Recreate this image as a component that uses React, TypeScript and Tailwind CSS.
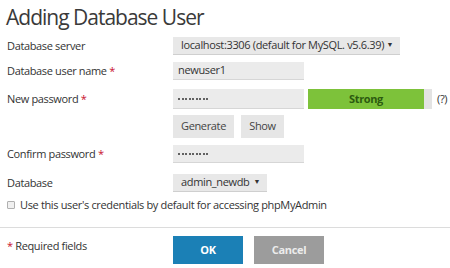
function Dots() {
  return (
    <div className="flex items-center gap-[1.5px]">
      {Array.from({ length: 9 }).map((_, i) => (
        <span key={i} className="w-[2px] h-[2px] rounded-full bg-[#333]" />
      ))}
    </div>
  );
}

export default function App() {
  const font = { fontFamily: '"Open Sans", "Noto Sans", sans-serif' };
  return (
    <div className="w-[450px] h-[268px] bg-white text-[#333] overflow-hidden tracking-[-0.35px]" style={font}>
      <h1 className="pl-[6px] pt-[2px] h-[34px] text-[21px] font-normal leading-[30px] tracking-[-1px] text-[#3a3a3a]">
        Adding Database User
      </h1>

      <div className="flex items-center h-[18px] mt-[3px] text-[11px]">
        <span className="w-[173px] pl-[7px]">Database server</span>
        <div className="w-[227px] h-[18px] bg-[#e8e8e8] border-b border-[#cfcfcf] flex items-center justify-between pl-[8px] pr-[7px] whitespace-nowrap">
          <span>localhost:3306 (default for MySQL. v5.6.39)</span>
          <span className="text-[7px]">▼</span>
        </div>
      </div>

      <div className="flex items-center h-[18px] mt-[7px] text-[11px]">
        <span className="w-[173px] pl-[7px]">
          Database user name <span className="text-[#c8102e]">*</span>
        </span>
        <div className="w-[131px] h-[18px] bg-[#ebebeb] border-b border-[#d6d6d6] flex items-center px-[5px]">
          newuser1
        </div>
      </div>

      <div className="flex items-center h-[20px] mt-[9px] text-[11px]">
        <span className="w-[173px] pl-[7px]">
          New password <span className="text-[#c8102e]">*</span>
        </span>
        <div className="w-[131px] h-[20px] bg-[#ebebeb] border-b border-[#d6d6d6] flex items-center px-[5px]">
          <Dots />
        </div>
        <div className="ml-[4px] w-[124px] h-[20px] flex bg-[#e3e3e3]">
          <div className="w-[116px] h-[20px] bg-[#7dc23a] flex items-center justify-center font-bold text-[#2c5a10]">
            Strong
          </div>
        </div>
        <span className="ml-[5px] text-[11px]">(?)</span>
      </div>

      <div className="flex h-[23px] mt-[6px] pl-[173px] gap-[7px] text-[11px]">
        <div className="w-[61px] h-[23px] bg-[#e6e6e6] flex items-center justify-center text-[#444]">Generate</div>
        <div className="w-[43px] h-[23px] bg-[#e6e6e6] flex items-center justify-center text-[#444]">Show</div>
      </div>

      <div className="flex items-center h-[18px] mt-[7px] text-[11px]">
        <span className="w-[173px] pl-[7px]">
          Confirm password <span className="text-[#c8102e]">*</span>
        </span>
        <div className="w-[131px] h-[18px] bg-[#ebebeb] border-b border-[#d6d6d6] flex items-center px-[5px]">
          <Dots />
        </div>
      </div>

      <div className="flex items-center h-[18px] mt-[11px] text-[11px]">
        <span className="w-[173px] pl-[7px]">Database</span>
        <div className="w-[94px] h-[18px] bg-[#e8e8e8] border-b border-[#cfcfcf] flex items-center justify-between pl-[8px] pr-[7px]">
          <span>admin_newdb</span>
          <span className="text-[7px]">▼</span>
        </div>
      </div>

      <label className="flex items-center h-[14px] mt-[6px] pl-[7px] text-[11px]">
        <span className="w-[8px] h-[8px] border border-[#b0b0b0] bg-[#f0f0f0] rounded-[1px]" />
        <span className="ml-[5px]">Use this user's credentials by default for accessing phpMyAdmin</span>
      </label>

      <div className="mt-[15px] border-t border-[#dcdcdc]" />

      <div className="flex mt-[8px] h-[28px] text-[11px]">
        <span className="w-[173px] pl-[7px] pt-[2px]">
          <span className="text-[#c8102e]">*</span> Required fields
        </span>
        <div className="w-[70px] h-[28px] bg-[#1b80b6] text-white font-bold flex items-center justify-center">OK</div>
        <div className="ml-[11px] w-[70px] h-[28px] bg-[#9c9c9c] text-[#ececec] font-bold flex items-center justify-center">Cancel</div>
      </div>
    </div>
  );
}
